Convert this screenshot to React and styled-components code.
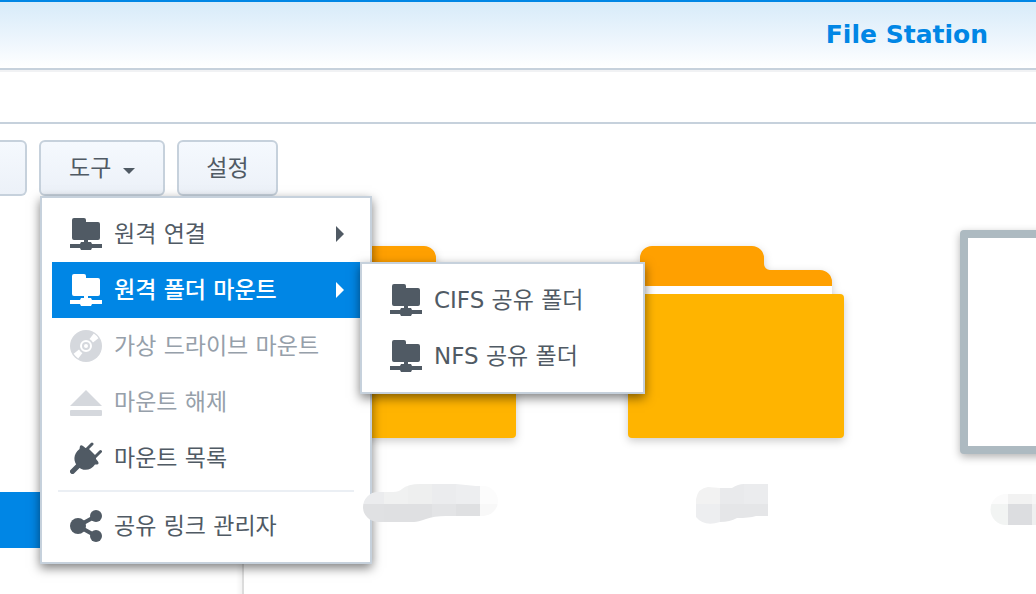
import React from 'react'
import styled, { createGlobalStyle, css } from 'styled-components'

const GlobalStyle = createGlobalStyle`
    * {
        box-sizing: border-box;
    }
    body {
        margin: 0;
        background-color: #fff;
        color: #505a64;
        font-family: 'DejaVu Sans', 'Noto Sans CJK KR', sans-serif;
        font-size: 23px;
        line-height: 32px;
    }
`

const Page = styled.div`
    display: flex;
    flex-direction: column;
    min-height: 100vh;
    overflow: hidden;
`

const Header = styled.header`
    display: flex;
    align-items: center;
    justify-content: flex-end;
    height: 70px;
    padding: 0 48px;
    border-top: 2px solid #0086e5;
    border-bottom: 2px solid #c6d1dc;
    background: linear-gradient(#d7ebf9, #eef6fd 60%, #fff);
    box-shadow: 0 2px #f1f2f4;
`

const Title = styled.h1`
    margin: 0;
    color: #0086e5;
    font-size: 25px;
    font-weight: bold;
`

const PathBar = styled.div`
    height: 54px;
    border-bottom: 2px solid #c6d1dc;
`

const Toolbar = styled.div`
    display: flex;
    gap: 12px;
    padding: 16px 0;
`

const ToolItem = styled.div`
    position: relative;
`

const ToolButton = styled.button`
    display: flex;
    align-items: center;
    gap: 12px;
    height: 56px;
    padding: 0 ${({ $padding = 28 }) => $padding}px;
    border: 2px solid #c6d1dc;
    border-radius: 6px;
    background: linear-gradient(#f5f9fe, #ecf1f8);
    color: inherit;
    font: inherit;
    cursor: pointer;
    ${({ $cut }) => $cut && css`
        width: 27px;
        padding: 0;
        border-left: 0;
        border-radius: 0 6px 6px 0;
    `}
`

const Caret = styled.svg`
    width: 12px;
    height: 6px;
    margin-top: 6px;
    fill: currentColor;
`

const MenuList = styled.ul`
    position: absolute;
    top: ${({ $sub }) => ($sub ? '0' : '56px')};
    left: ${({ $sub }) => ($sub ? '100%' : '1px')};
    z-index: 2;
    width: ${({ $sub }) => ($sub ? '285px' : '332px')};
    margin: 0;
    padding: 8px 10px;
    border: 2px solid #c6d1dc;
    background-color: #fff;
    box-shadow: 0 4px 10px rgba(0, 0, 0, 0.5);
    list-style-type: none;
`

const MenuRow = styled.li`
    position: relative;
`

const MenuButton = styled.button`
    display: flex;
    align-items: center;
    gap: 12px;
    width: 100%;
    height: 56px;
    padding: 0 16px 0 18px;
    border: 0;
    background-color: ${({ $active }) => ($active ? '#0086e5' : 'transparent')};
    color: ${({ $active }) => ($active ? '#fff' : '#505a64')};
    font: inherit;
    font-weight: ${({ $active }) => ($active ? 500 : 400)};
    text-align: left;
    white-space: nowrap;
    cursor: pointer;
    &:disabled {
        color: #96a0aa;
        cursor: default;
    }
    &:disabled svg {
        color: #d5d8dd;
    }
`

const MenuLabel = styled.span`
    flex: 1;
`

const Separator = styled.li`
    height: 2px;
    margin: 4px 6px 6px;
    background-color: #ebeff4;
`

const Icon = styled.svg`
    flex: none;
    width: 32px;
    height: 32px;
    fill: currentColor;
`

const Arrow = styled.svg`
    width: 8px;
    height: 16px;
    fill: currentColor;
`

const Content = styled.div`
    display: flex;
    flex: 1;
`

const Sidebar = styled.nav`
    flex: 0 0 244px;
    padding-top: 280px;
    border-right: 2px solid #dcdcdc;
    background: linear-gradient(to left, #f3f3f3, #fff 6px);
`

const SelectedNode = styled.div`
    height: 56px;
    background-color: #0086e5;
`

const Files = styled.main`
    display: flex;
    flex: 1;
    min-width: 0;
    padding-top: 18px;
`

const FileCell = styled.figure`
    flex: 0 0 328px;
    margin: 0;
`

const Thumb = styled.div`
    display: flex;
    align-items: center;
    justify-content: center;
    height: 224px;
    margin-bottom: 26px;
`

const FolderDrawing = styled.svg`
    width: 216px;
    height: 192px;
    overflow: visible;
    filter: drop-shadow(0 3px 4px rgba(0, 0, 0, 0.2));
`

const DocumentThumb = styled.div`
    width: 208px;
    height: 224px;
    border: 8px solid #adbac1;
    border-radius: 4px;
    background-color: #fff;
    box-shadow: 0 3px 8px rgba(0, 0, 0, 0.3);
`

const MaskedName = styled.svg`
    position: relative;
    z-index: 3;
    display: block;
    width: 328px;
    height: 48px;
`

const NetworkFolderIcon = () => (
    <Icon viewBox="0 0 32 32" aria-hidden="true">
        <path d="M4 0h10a2 2 0 0 1 2 2v2h12a2 2 0 0 1 2 2v14a2 2 0 0 1-2 2H18v2h3l1 2h10v4H22l-1 2H11l-1-2H0v-4h10l1-2h3v-2H4a2 2 0 0 1-2-2V2a2 2 0 0 1 2-2z" />
    </Icon>
)

const DiscIcon = () => (
    <Icon viewBox="0 0 32 32" aria-hidden="true">
        <circle cx="16" cy="16" r="16" />
        <path fill="#fff" d="M19.5 9l4.3-5.4q2.7 1.8 4.6 4.6L23 12.5q-1.3-2.3-3.5-3.5zM12.5 23l-4.3 5.4q-2.7-1.8-4.6-4.6L9 19.5q1.3 2.3 3.5 3.5z" />
        <circle cx="16" cy="16" r="5" fill="none" stroke="#fff" strokeWidth="2" />
        <circle cx="16" cy="16" r="2" fill="#fff" />
    </Icon>
)

const EjectIcon = () => (
    <Icon viewBox="0 0 32 32" aria-hidden="true">
        <path d="M16 4l16 16H0z" />
        <rect y="24" width="32" height="6" rx="1" />
    </Icon>
)

const PlugIcon = () => (
    <Icon viewBox="0 0 32 32" aria-hidden="true">
        <path d="M10 4q1-1.500 3 0l2.500 2H18l8 8v3l2 2.500q1.500 2.500-1 3H25C21 29 12.500 29.500 8 24.500C3 20 3 12 9.500 7z" />
        <path d="M2.500 29.500l7-7" stroke="currentColor" strokeWidth="5" strokeLinecap="round" />
        <path d="M16 8l6-6M24 16l6.500-6.500" stroke="currentColor" strokeWidth="3" strokeLinecap="round" />
    </Icon>
)

const ShareIcon = () => (
    <Icon viewBox="0 0 32 32" aria-hidden="true">
        <path d="M26 6L8 16l18 10" fill="none" stroke="currentColor" strokeWidth="4" />
        <circle cx="8" cy="16" r="8" />
        <circle cx="26" cy="6" r="6" />
        <circle cx="26" cy="26" r="6" />
    </Icon>
)

const MenuItem = ({ icon, label, active, disabled, arrow, children }) => (
    <MenuRow role="none">
        <MenuButton
            type="button"
            role="menuitem"
            $active={active}
            disabled={disabled}
            aria-haspopup={arrow ? 'menu' : undefined}
            aria-expanded={arrow ? Boolean(children) : undefined}
        >
            {icon}
            <MenuLabel>{label}</MenuLabel>
            {arrow && <Arrow viewBox="0 0 8 16" aria-hidden="true"><path d="M0 0l8 8-8 8z" /></Arrow>}
        </MenuButton>
        {children}
    </MenuRow>
)

const Folder = () => (
    <FolderDrawing viewBox="0 0 216 192" role="img" aria-label="폴더">
        <path fill="#ffa000" d="M12 48V12A12 12 0 0 1 24 0h100a12 12 0 0 1 12 12v6a6 6 0 0 0 6 6h50a12 12 0 0 1 12 12v12z" />
        <path fill="#fff" d="M12 40h192v8H12z" />
        <rect y="48" width="216" height="144" rx="4" fill="#ffb400" />
    </FolderDrawing>
)

// Each block is [x, width, upper colour, lower colour]
const names = [
    {
        id: 'name-1',
        outline: 'M134 12h15q6 0 9-3q6-5 18-5h36l20 2h7a15 15 0 0 1 0 30h-37q-12 0-20 3t-12 3h-36a15 15 0 0 1 0-30z',
        blocks: [
            [116, 24, '#ebecee', '#e0e1e3'],
            [140, 24, '#f0f1f1', '#dfe0e2'],
            [164, 24, '#eeefef', '#dfe0e2'],
            [188, 24, '#ebecee', '#e3e4e6'],
            [212, 24, '#edeef0', '#dfe0e2'],
            [236, 24, '#fcfcfc', '#f8f8f8'],
        ],
    },
    {
        id: 'name-2',
        outline: 'M124 19q2-11 12-12l12 1h12q6-4 12-4h24v32h-12q-7 2-19 2-7 4-17 4-16 5-24-5z',
        blocks: [
            [124, 24, '#f2f2f2', '#edeef0'],
            [148, 24, '#e9eaec', '#e5e6e8'],
            [172, 24, '#ebecee', '#e5e6e8'],
        ],
    },
    {
        id: 'name-3',
        outline: 'M106 14h94v31h-94a15 15 0 0 1 0-31z',
        blocks: [
            [90, 18, '#fbfbfb', '#f2f4f3'],
            [108, 24, '#f2f2f2', '#dcdde0'],
            [132, 48, '#f6f6f6', '#eff0f0'],
        ],
    },
]

const FileName = ({ name }) => (
    <MaskedName viewBox="0 0 328 48" aria-hidden="true">
        <clipPath id={name.id}>
            <path d={name.outline} />
        </clipPath>
        <g clipPath={`url(#${name.id})`} shapeRendering="crispEdges">
            {name.blocks.map(([x, width, upper, lower]) => (
                <React.Fragment key={x}>
                    <rect x={x} width={width} height="24" fill={upper} />
                    <rect x={x} y="24" width={width} height="24" fill={lower} />
                </React.Fragment>
            ))}
        </g>
    </MaskedName>
)

const ToolsMenu = () => (
    <MenuList role="menu" aria-label="도구">
        <MenuItem icon={<NetworkFolderIcon />} label="원격 연결" arrow />
        <MenuItem icon={<NetworkFolderIcon />} label="원격 폴더 마운트" arrow active>
            <MenuList $sub role="menu" aria-label="원격 폴더 마운트">
                <MenuItem icon={<NetworkFolderIcon />} label="CIFS 공유 폴더" />
                <MenuItem icon={<NetworkFolderIcon />} label="NFS 공유 폴더" />
            </MenuList>
        </MenuItem>
        <MenuItem icon={<DiscIcon />} label="가상 드라이브 마운트" disabled />
        <MenuItem icon={<EjectIcon />} label="마운트 해제" disabled />
        <MenuItem icon={<PlugIcon />} label="마운트 목록" />
        <Separator role="separator" />
        <MenuItem icon={<ShareIcon />} label="공유 링크 관리자" />
    </MenuList>
)

const App = () => (
    <Page>
        <GlobalStyle />
        <Header>
            <Title>File Station</Title>
        </Header>
        <PathBar />
        <Toolbar>
            <ToolButton type="button" $cut aria-label="작업" />
            <ToolItem>
                <ToolButton type="button" aria-haspopup="menu" aria-expanded="true">
                    도구
                    <Caret viewBox="0 0 12 6" aria-hidden="true"><path d="M0 0h12L6 6z" /></Caret>
                </ToolButton>
                <ToolsMenu />
            </ToolItem>
            <ToolButton type="button" $padding={27}>설정</ToolButton>
        </Toolbar>
        <Content>
            <Sidebar>
                <SelectedNode />
            </Sidebar>
            <Files>
                <FileCell>
                    <Thumb><Folder /></Thumb>
                    <FileName name={names[0]} />
                </FileCell>
                <FileCell>
                    <Thumb><Folder /></Thumb>
                    <FileName name={names[1]} />
                </FileCell>
                <FileCell>
                    <Thumb><DocumentThumb /></Thumb>
                    <FileName name={names[2]} />
                </FileCell>
            </Files>
        </Content>
    </Page>
)

export default App
